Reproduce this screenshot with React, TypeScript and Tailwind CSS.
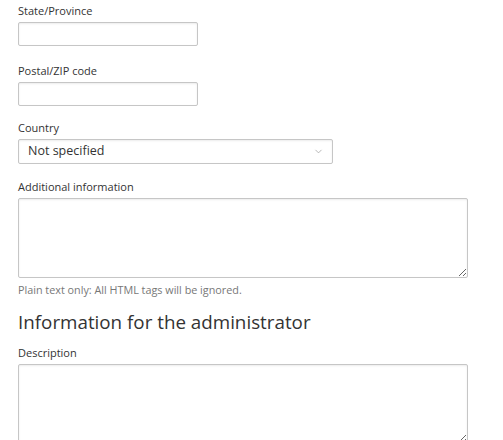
import { ChevronDown } from 'lucide-react'

const font = { fontFamily: '"Open Sans", "Noto Sans", sans-serif' }

function Label({ children }: { children: string }) {
  return <label className="block text-[11px] leading-[22px] text-[#333]">{children}</label>
}

const boxClass =
  'block border border-[#c6c6c6] rounded-[2px] bg-white shadow-[inset_0_1px_2px_rgba(0,0,0,0.08)] outline-none'

export default function App() {
  return (
    <div className="min-h-screen bg-white px-[18px]" style={font}>
      {/* Address fields */}
      <div className="mb-[14px]">
        <Label>State/Province</Label>
        <input className={`${boxClass} w-[180px] h-[24px]`} />
      </div>

      <div className="mb-[11px]">
        <Label>Postal/ZIP code</Label>
        <input className={`${boxClass} w-[180px] h-[24px]`} />
      </div>

      <div className="mb-[12px]">
        <Label>Country</Label>
        <div className={`${boxClass} w-[315px] h-[25px] flex items-center justify-between pl-[9px] pr-[8px]`}>
          <span className="text-[12.5px] text-[#333]">Not specified</span>
          <ChevronDown className="w-[11px] h-[11px] text-[#999]" strokeWidth={1.5} />
        </div>
      </div>

      <div>
        <Label>Additional information</Label>
        <textarea className={`${boxClass} w-[450px] h-[80px] resize`} />
        <p className="text-[10.8px] leading-[16px] text-[#777] mt-[4px]">
          Plain text only: All HTML tags will be ignored.
        </p>
      </div>

      {/* Admin section */}
      <h2 className="text-[18.8px] leading-[26px] font-medium text-[#333] mt-[11px] mb-[7px]">
        Information for the administrator
      </h2>

      <div>
        <Label>Description</Label>
        <textarea className={`${boxClass} w-[450px] h-[80px] resize`} />
      </div>
    </div>
  )
}
